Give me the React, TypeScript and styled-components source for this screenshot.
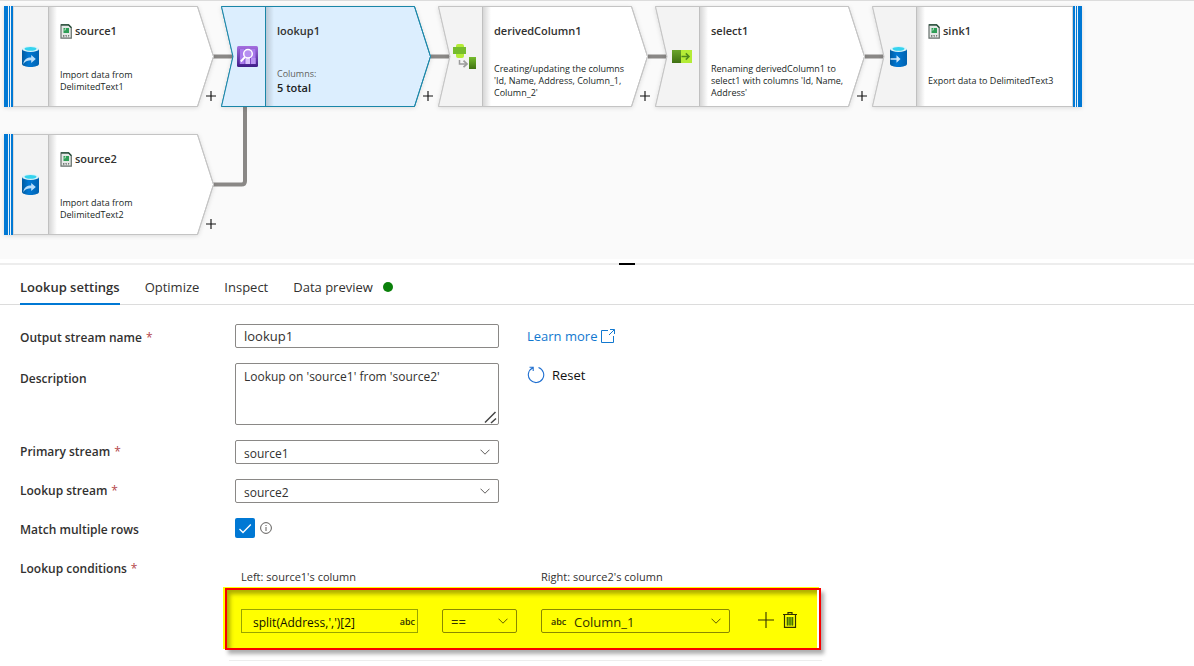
import React from "react";
import styled, { createGlobalStyle, css } from "styled-components";

const GlobalStyle = createGlobalStyle`
  * { box-sizing: border-box; }
  body {
    margin: 0;
    background: #fff;
    color: #323130;
    font-family: "Open Sans", "Noto Sans", sans-serif;
    font-size: 13px;
  }
  button, input, select, textarea { font-family: inherit; }
`;

/* ---------- data flow canvas ---------- */

const Canvas = styled.section`
  position: relative;
  height: 259px;
  border-top: 1px solid #dcdcdc;
  background: #fafafa;
  overflow: hidden;
`;

const Connectors = styled.svg`
  position: absolute;
  left: 0;
  top: -1px;
`;

const NodeBox = styled.article<{ $x: number; $y: number }>`
  position: absolute;
  left: ${(p) => p.$x}px;
  top: ${(p) => p.$y}px;
  display: flex;
  width: 216px;
  height: 101px;
`;

const NodeShape = styled.svg`
  position: absolute;
  left: 0;
  top: 0;
  overflow: visible;
  filter: drop-shadow(0 1px 2px rgba(0, 0, 0, 0.12));
`;

const NodeIcon = styled.div`
  position: relative;
  display: flex;
  align-items: center;
  justify-content: center;
  width: 56px;
  padding-right: 3px;
`;

const NodeBody = styled.div`
  position: relative;
  width: 136px;
  padding-top: 15px;
`;

const NodeTitle = styled.h3`
  display: flex;
  align-items: center;
  gap: 3px;
  margin: 0;
  font-size: 11px;
  font-weight: 600;
  line-height: 20px;
  color: #323130;
`;

const NodeDetail = styled.div`
  display: flex;
  flex-direction: column;
  justify-content: center;
  height: 40px;
  margin-top: 20px;
  font-size: 9px;
  line-height: 12px;
  color: #201f1e;
`;

const ColumnsLabel = styled.span`
  line-height: 14px;
  color: #605e5c;
`;

const ColumnsTotal = styled.strong`
  font-size: 11px;
  font-weight: 600;
  line-height: 14px;
`;

const AddButton = styled.button`
  position: absolute;
  left: 202px;
  top: 85px;
  display: flex;
  padding: 0;
  border: 0;
  background: none;
  color: #111;
`;

type Kind = "source" | "transform" | "sink";

const BLUE = "#0078d4";

function Shape({ kind, active }: { kind: Kind; active?: boolean }) {
  const line = active ? "#1a86a8" : "#c4c4c4";
  const outline =
    kind === "source"
      ? "M9 .5H193.5L209.5 50.5L193.5 100.5H9Z"
      : kind === "sink"
        ? "M.5 .5H201V100.5H.5L12 50.5Z"
        : "M.5 .5H193.5L209.5 50.5L193.5 100.5H.5L12 50.5Z";
  const side = kind === "source" ? "M9 1H44.5V100H9Z" : "M.5 .5H44.5V100.5H.5L12 50.5Z";
  return (
    <NodeShape width="210" height="101" aria-hidden="true">
      <defs>
        <linearGradient id="fold" x1="0" x2="1" y1="0" y2="0">
          <stop offset="0" stopColor="#000" stopOpacity="0.16" />
          <stop offset="1" stopColor="#000" stopOpacity="0" />
        </linearGradient>
      </defs>
      <path d={outline} fill={active ? "#dceefe" : "#fff"} stroke={line} />
      <path d={side} fill={active ? "#dceefe" : "#f3f3f3"} />
      <rect x="45" y="1" width="8" height="99" fill="url(#fold)" />
      <path d="M44.5 1V100" stroke={active ? "#1a86a8" : "#c0c0c0"} />
      <path d={outline} fill="none" stroke={line} />
      {kind === "source" && (
        <g>
          <rect width="9" height="101" fill="#eaf4fc" />
          <path d="M0 0H4V101H0ZM5 0H6V101H5ZM7 0H9V101H7Z" fill={BLUE} />
        </g>
      )}
      {kind === "sink" && (
        <g>
          <rect x="201" width="9" height="101" fill="#eaf4fc" />
          <path d="M201 0H203V101H201ZM204 0H205V101H204ZM206 0H210V101H206Z" fill={BLUE} />
        </g>
      )}
    </NodeShape>
  );
}

const Plus = ({ size }: { size: number }) => (
  <svg width={size} height={size} viewBox="0 0 16 16" aria-hidden="true">
    <path d="M8 0V16M0 8H16" stroke="currentColor" strokeWidth={size > 12 ? 1.1 : 1.8} />
  </svg>
);

const CsvIcon = () => (
  <svg width="12" height="15" viewBox="0 0 12 15" aria-hidden="true">
    <path d="M1 .8H8.6L11.3 3.6V14.2H1Z" fill="#e4e8e6" stroke="#66706c" strokeWidth="1.2" />
    <path d="M1 .8H8.6L11.3 3.6" fill="none" stroke="#1e4a33" strokeWidth="1.3" />
    <rect x="3.500" y="4" width="5.500" height="5" fill="#2f9e57" />
    <path d="M3.500 6H5.500V4" stroke="#c7ead2" strokeWidth=".7" fill="none" />
    <path d="M3 11.500H4.400M5.400 11.500H6.800M8 11.500H9.200M3 12.700H4.400M5.800 12.700H6.800M8.300 12.700H9" stroke="#59605c" strokeWidth=".8" />
  </svg>
);

const Cylinder = ({ children }: { children: React.ReactNode }) => (
  <svg width="17" height="21" viewBox="0 0 17 21" aria-hidden="true">
    <defs>
      <linearGradient id="cyl" x1="0" x2="1">
        <stop offset="0" stopColor="#005ba1" />
        <stop offset=".4" stopColor="#0078d4" />
        <stop offset="1" stopColor="#0062b0" />
      </linearGradient>
    </defs>
    <path d="M0 3V18C0 19.600 3.800 21 8.500 21S17 19.600 17 18V3Z" fill="url(#cyl)" />
    <ellipse cx="8.500" cy="3" rx="8.500" ry="3" fill="#d9f3fa" />
    <ellipse cx="8.500" cy="2.800" rx="6" ry="1.900" fill="#35d3ee" />
    {children}
  </svg>
);

const SourceIcon = () => (
  <Cylinder>
    <path d="M1.300 18C2 13.500 5 11.600 9.200 11.600V9L13.800 13L9.200 17V14.300C6 14.300 3.500 15 1.300 18Z" fill="#b9defa" />
  </Cylinder>
);

const SinkIcon = () => (
  <Cylinder>
    <path d="M.5 12.200H6.500V9.200L10.500 13L6.500 16.800V13.800H.5Z" fill="#cfe8fb" />
  </Cylinder>
);

const LookupIcon = () => (
  <svg width="21" height="21" viewBox="0 0 21 21" aria-hidden="true">
    <defs>
      <linearGradient id="violet" x1="0" x2="0" y1="0" y2="1">
        <stop offset="0" stopColor="#a56fe0" />
        <stop offset="1" stopColor="#3f1d88" />
      </linearGradient>
    </defs>
    <rect width="21" height="21" rx="1.500" fill="url(#violet)" />
    <rect x="2.500" y="3" width="16" height="15" fill="#7d49c8" />
    <path d="M3 3H7.500V18H3ZM8.500 3H13V18H8.500ZM14 3H18.500V18H14Z" fill="#a97bec" />
    <path d="M8.500 12V18H13V12Z" fill="#d9c4fb" />
    <path d="M14 12V18H18.500V12Z" fill="#b993f2" />
    <circle cx="11" cy="7.700" r="4.300" fill="#b68ff0" stroke="#fff" strokeWidth="1.500" />
    <path d="M8 11L3.800 15.500" stroke="#fff" strokeWidth="1.900" />
  </svg>
);

const DerivedIcon = () => (
  <svg width="24" height="26" viewBox="0 0 24 26" aria-hidden="true">
    <defs>
      <linearGradient id="leaf" x1="0" x2="0" y1="0" y2="1">
        <stop offset="0" stopColor="#76bc2d" />
        <stop offset="1" stopColor="#3f7012" />
      </linearGradient>
    </defs>
    <rect x="3" y="0" width="8" height="14" rx="2" fill="#b4ec36" />
    <rect x="0" y="3" width="13" height="7" fill="#76bc2d" />
    <path d="M6.500 16V20H13" fill="none" stroke="#9b9b9b" strokeWidth="1.500" />
    <path d="M10.500 16.600L14 20L10.500 23.200" fill="none" stroke="#9b9b9b" strokeWidth="1.700" />
    <rect x="16" y="13" width="7" height="12" fill="url(#leaf)" />
  </svg>
);

const SelectIcon = () => (
  <svg width="20" height="13" viewBox="0 0 20 13" aria-hidden="true">
    <defs>
      <linearGradient id="moss" x1="0" x2="0" y1="0" y2="1">
        <stop offset="0" stopColor="#6aa52c" />
        <stop offset="1" stopColor="#3f7012" />
      </linearGradient>
    </defs>
    <rect width="9" height="13" fill="url(#moss)" />
    <rect x="9" width="11" height="13" fill="#b4ec36" />
    <path d="M9.500 6.500H16.500M13.800 3.400L17 6.500L13.800 9.600" fill="none" stroke="#4f8a1c" strokeWidth="1.500" />
  </svg>
);

interface NodeProps {
  x: number;
  y: number;
  kind: Kind;
  name: string;
  icon: React.ReactNode;
  active?: boolean;
  children: React.ReactNode;
}

function FlowNode({ x, y, kind, name, icon, active, children }: NodeProps) {
  return (
    <NodeBox $x={x} $y={y}>
      <Shape kind={kind} active={active} />
      <NodeIcon>{icon}</NodeIcon>
      <NodeBody>
        <NodeTitle>
          {kind !== "transform" && <CsvIcon />}
          {name}
        </NodeTitle>
        <NodeDetail>{children}</NodeDetail>
      </NodeBody>
      {kind !== "sink" && (
        <AddButton type="button" aria-label={`Add step after ${name}`}>
          <Plus size={10} />
        </AddButton>
      )}
    </NodeBox>
  );
}

/* ---------- splitter and tabs ---------- */

const Splitter = styled.div`
  display: flex;
  justify-content: center;
  height: 2px;
  margin-top: 4px;
  padding-left: 60px;
  background: #ededed;
`;

const Grip = styled.span`
  width: 16px;
  background: #000;
`;

const Tabs = styled.nav`
  display: flex;
  gap: 25px;
  height: 40px;
  padding: 0 20px;
  border-bottom: 1px solid #dcdcdc;
`;

const Tab = styled.button<{ $active?: boolean }>`
  display: flex;
  align-items: center;
  gap: 10px;
  height: 40px;
  padding: 6px 0 0;
  border: 0;
  border-bottom: 2px solid ${(p) => (p.$active ? BLUE : "transparent")};
  background: none;
  color: #323130;
  font-size: 13px;
  font-weight: ${(p) => (p.$active ? 600 : 400)};
`;

const StatusDot = styled.span`
  width: 10px;
  height: 10px;
  border-radius: 50%;
  background: #0a800a;
`;

/* ---------- settings form ---------- */

const Form = styled.form`
  display: flex;
  flex-direction: column;
  gap: 15px;
  padding: 19px 20px 0;
`;

const Row = styled.div`
  display: grid;
  grid-template-columns: 215px 264px 1fr;
  align-items: start;
`;

const Label = styled.label<{ $drop?: number }>`
  padding-top: ${(p) => p.$drop ?? 2}px;
  font-size: 12px;
  font-weight: 600;
  line-height: 20px;
`;

const Star = styled.span`
  margin-left: 4px;
  color: #b5474b;
  font-weight: 400;
`;

const fieldStyle = css`
  width: 100%;
  border: 1px solid #8a8886;
  border-radius: 2px;
  background: #fff;
  color: #323130;
  outline: none;
`;

const TextInput = styled.input`
  ${fieldStyle}
  height: 24px;
  padding: 0 8px;
  font-size: 13px;
`;

const AreaWrap = styled.div`
  position: relative;
  display: flex;
`;

const TextArea = styled.textarea`
  ${fieldStyle}
  height: 62px;
  padding: 4px 8px;
  font-size: 12px;
  line-height: 18px;
  resize: none;
`;

const ResizeMark = styled.svg`
  position: absolute;
  right: 2px;
  bottom: 1px;
`;

const SelectWrap = styled.div<{ $width?: number }>`
  position: relative;
  display: flex;
  align-items: center;
  width: ${(p) => (p.$width ? `${p.$width}px` : "100%")};
`;

const SelectBox = styled.select<{ $marked?: boolean; $indent?: number }>`
  ${fieldStyle}
  appearance: none;
  height: 24px;
  padding: 2px 24px 0 ${(p) => p.$indent ?? 8}px;
  font-size: ${(p) => (p.$marked ? 13 : 12)}px;
  ${(p) =>
    p.$marked &&
    css`
      border-color: #8a8800;
      background: transparent;
      color: #323100;
    `}
`;

const ChevronIcon = styled.svg`
  position: absolute;
  right: 9px;
  pointer-events: none;
`;

const Chevron = ({ color = "#605e5c" }: { color?: string }) => (
  <ChevronIcon width="10" height="6" viewBox="0 0 10 6" aria-hidden="true">
    <path d="M.5 .7L5 5.200L9.500 .7" fill="none" stroke={color} />
  </ChevronIcon>
);

const LearnMore = styled.a`
  display: flex;
  align-items: center;
  gap: 4px;
  margin-left: 28px;
  color: #1278cf;
  line-height: 24px;
  text-decoration: none;
`;

const ResetButton = styled.button`
  display: flex;
  align-items: center;
  gap: 7px;
  width: max-content;
  height: 24px;
  margin-left: 28px;
  padding: 0;
  border: 0;
  background: none;
  color: #111;
  font-size: 13px;
`;

const CheckLine = styled.div`
  display: flex;
  gap: 5px;
  height: 24px;
`;

const CheckBox = styled.span`
  position: relative;
  display: flex;
  width: 20px;
  height: 20px;

  input {
    width: 20px;
    height: 20px;
    margin: 0;
    appearance: none;
    border-radius: 2px;
    background: ${BLUE};
  }

  svg {
    position: absolute;
    inset: 0;
    pointer-events: none;
  }
`;

const InfoButton = styled.button`
  display: flex;
  align-items: center;
  height: 20px;
  padding: 0;
  border: 0;
  background: none;
`;

const Conditions = styled.div`
  max-width: 597px;
`;

const ConditionRow = styled.div`
  display: grid;
  grid-template-columns: 215px 1fr;
  align-items: start;
`;

const Heads = styled.div`
  display: flex;
  gap: 24px;
  padding: 10px 0 0 6px;
  font-size: 11px;
  line-height: 20px;
`;

const Head = styled.span<{ $width: number }>`
  width: ${(p) => p.$width}px;
`;

const Highlight = styled.div`
  display: flex;
  align-items: flex-start;
  gap: 24px;
  width: 596px;
  height: 62px;
  margin: 1px 0 0 -10px;
  padding: 19px 14px 0;
  border: 2px solid #f80000;
  background: #ff0;
  box-shadow:
    inset -2px 0 0 #fff,
    inset 3px 4px 4px rgba(70, 70, 0, 0.45),
    -2px -1px 0 #ff0,
    3px 4px 4px rgba(0, 0, 0, 0.32);
`;

const Expression = styled.div`
  position: relative;
  display: flex;
  align-items: center;
  width: 177px;

  input {
    width: 100%;
    height: 24px;
    padding: 2px 30px 0 11px;
    border: 1px solid #98a400;
    background: transparent;
    color: #111100;
    font-size: 12px;
    outline: none;
  }
`;

const TypeTag = styled.span<{ $side: "left" | "right" }>`
  position: absolute;
  ${(p) => (p.$side === "right" ? "right: 3px;" : "left: 10px;")}
  color: #323100;
  font-size: 9px;
  font-weight: 600;
  pointer-events: none;
`;

const Actions = styled.div`
  display: flex;
  align-items: center;
  gap: 9px;
  height: 22px;
  margin-left: 4px;
`;

const IconButton = styled.button`
  display: flex;
  padding: 0;
  border: 0;
  background: none;
  color: #323100;
`;

const EndRule = styled.hr`
  width: 593px;
  height: 1px;
  margin: 10px 0 0 -6px;
  border: 0;
  background: #ededed;
`;

export default function App() {
  return (
    <>
      <GlobalStyle />
      <Canvas>
        <Connectors width="1000" height="259" aria-hidden="true">
          <path
            d="M213 56.500H233M431 56.500H450M648 56.500H667M865 56.500H884M213 184.500H241.500Q245 184.500 245 181V107"
            fill="none"
            stroke="#8a8886"
            strokeWidth="4"
          />
        </Connectors>
        <FlowNode x={4} y={5} kind="source" name="source1" icon={<SourceIcon />}>
          Import data from DelimitedText1
        </FlowNode>
        <FlowNode x={221} y={5} kind="transform" name="lookup1" icon={<LookupIcon />} active>
          <ColumnsLabel>Columns:</ColumnsLabel>
          <ColumnsTotal>5 total</ColumnsTotal>
        </FlowNode>
        <FlowNode x={438} y={5} kind="transform" name="derivedColumn1" icon={<DerivedIcon />}>
          Creating/updating the columns 'Id, Name, Address, Column_1, Column_2'
        </FlowNode>
        <FlowNode x={655} y={5} kind="transform" name="select1" icon={<SelectIcon />}>
          Renaming derivedColumn1 to select1 with columns 'Id, Name, Address'
        </FlowNode>
        <FlowNode x={872} y={5} kind="sink" name="sink1" icon={<SinkIcon />}>
          Export data to DelimitedText3
        </FlowNode>
        <FlowNode x={4} y={133} kind="source" name="source2" icon={<SourceIcon />}>
          Import data from DelimitedText2
        </FlowNode>
      </Canvas>

      <Splitter>
        <Grip />
      </Splitter>

      <Tabs>
        <Tab type="button" $active>Lookup settings</Tab>
        <Tab type="button">Optimize</Tab>
        <Tab type="button">Inspect</Tab>
        <Tab type="button">
          Data preview
          <StatusDot />
        </Tab>
      </Tabs>

      <Form>
        <Row>
          <Label htmlFor="stream-name" $drop={4}>
            Output stream name<Star>*</Star>
          </Label>
          <TextInput id="stream-name" defaultValue="lookup1" />
          <LearnMore href="#learn-more">
            Learn more
            <svg width="14" height="14" viewBox="0 0 14 14" aria-hidden="true">
              <path d="M7 1.500H.5V13.500H12.500V7M9 .5H13.500V5M13.300 .7L8 6" fill="none" stroke="currentColor" />
            </svg>
          </LearnMore>
        </Row>
        <Row>
          <Label htmlFor="description" $drop={6}>Description</Label>
          <AreaWrap>
            <TextArea id="description" defaultValue="Lookup on 'source1' from 'source2'" />
            <ResizeMark width="13" height="13" viewBox="0 0 13 13" aria-hidden="true">
              <path d="M1 11.500L11.500 1M7 12L12 7.500" stroke="#444" strokeWidth="1.500" />
            </ResizeMark>
          </AreaWrap>
          <ResetButton type="button">
            <svg width="18" height="18" viewBox="0 0 18 18" aria-hidden="true">
              <path d="M11.500 1.600A7.700 7.700 0 1 1 5.600 2M2.500 1.200H6.200V5" fill="none" stroke="#1f6fd0" strokeWidth="1.100" />
            </svg>
            Reset
          </ResetButton>
        </Row>
        <Row>
          <Label htmlFor="primary">Primary stream<Star>*</Star></Label>
          <SelectWrap>
            <SelectBox id="primary">
              <option>source1</option>
            </SelectBox>
            <Chevron />
          </SelectWrap>
        </Row>
        <Row>
          <Label htmlFor="lookup">Lookup stream<Star>*</Star></Label>
          <SelectWrap>
            <SelectBox id="lookup">
              <option>source2</option>
            </SelectBox>
            <Chevron />
          </SelectWrap>
        </Row>
        <Row>
          <Label htmlFor="multiple">Match multiple rows</Label>
          <CheckLine>
            <CheckBox>
              <input id="multiple" type="checkbox" defaultChecked />
              <svg width="20" height="20" viewBox="0 0 20 20" aria-hidden="true">
                <path d="M4.500 11L8 14.500L15.800 6.500" fill="none" stroke="#fff" strokeWidth="1.300" />
              </svg>
            </CheckBox>
            <InfoButton type="button" aria-label="About matching multiple rows">
              <svg width="12" height="12" viewBox="0 0 12 12" aria-hidden="true">
                <circle cx="6" cy="6" r="5.400" fill="none" stroke="#605e5c" />
                <path d="M6 5V9M6 3V4" stroke="#605e5c" />
              </svg>
            </InfoButton>
          </CheckLine>
        </Row>
        <ConditionRow>
          <Label as="span">Lookup conditions<Star>*</Star></Label>
          <Conditions>
            <Heads>
              <Head $width={276}>Left: source1's column</Head>
              <Head $width={189}>Right: source2's column</Head>
            </Heads>
            <Highlight>
              <Expression>
                <input aria-label="Left: source1's column" defaultValue="split(Address,',')[2]" />
                <TypeTag $side="right">abc</TypeTag>
              </Expression>
              <SelectWrap $width={75}>
                <SelectBox aria-label="Operator" $marked>
                  <option>==</option>
                </SelectBox>
                <Chevron color="#605e00" />
              </SelectWrap>
              <SelectWrap $width={189}>
                <TypeTag $side="left">abc</TypeTag>
                <SelectBox aria-label="Right: source2's column" $marked $indent={32}>
                  <option>Column_1</option>
                </SelectBox>
                <Chevron color="#605e00" />
              </SelectWrap>
              <Actions>
                <IconButton type="button" aria-label="Add condition">
                  <Plus size={16} />
                </IconButton>
                <IconButton type="button" aria-label="Delete condition">
                  <svg width="14" height="16" viewBox="0 0 14 16" aria-hidden="true">
                    <path d="M0 2.500H14M5 2.500V.6H9V2.500M1.500 2.500V15.400H12.500V2.500" fill="none" stroke="#323100" strokeWidth="1.200" />
                    <rect x="3.500" y="5" width="7" height="8.500" fill="#7cae00" />
                    <path d="M4.500 5V13.500M7 5V13.500M9.500 5V13.500" stroke="#4c6a00" />
                  </svg>
                </IconButton>
              </Actions>
            </Highlight>
            <EndRule />
          </Conditions>
        </ConditionRow>
      </Form>
    </>
  );
}
